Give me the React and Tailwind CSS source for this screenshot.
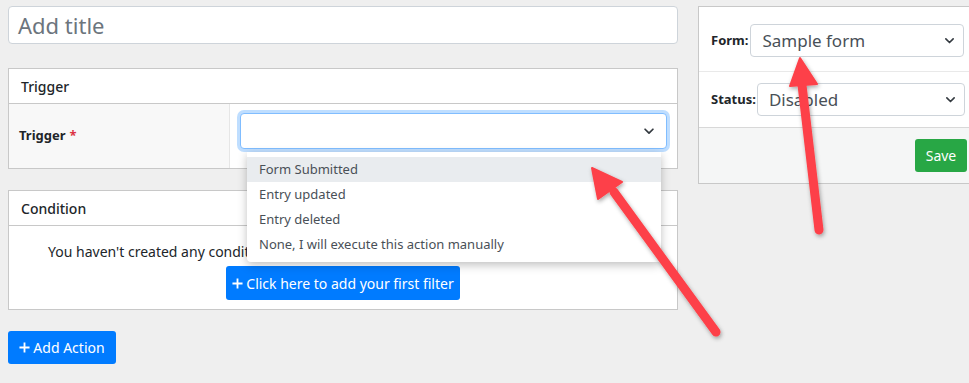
import React from "react";

const Chevron = ({ className = "" }) => (
    <svg viewBox="0 0 16 16" className={className} fill="none" stroke="currentColor" strokeWidth="2" strokeLinecap="round" strokeLinejoin="round">
        <path d="M3.5 6l4.5 4.5L12.5 6" />
    </svg>
);

const Plus = () => (
    <svg viewBox="0 0 12 12" className="w-[11px] h-[11px] mr-[3px]" fill="none" stroke="currentColor" strokeWidth="2">
        <path d="M6 0.5v11M0.5 6h11" />
    </svg>
);

function FakeSelect({ value, className = "" }) {
    return (
        <div className={`flex items-center justify-between h-[33px] pl-[11px] pr-[7px] bg-white border border-[#ced4da] rounded text-[17px] text-[#495057] ${className}`}>
            <span>{value}</span>
            <Chevron className="w-[13px] h-[13px] text-[#343a40]" />
        </div>
    );
}

export default function App() {
    const options = ["Form Submitted", "Entry updated", "Entry deleted", "None, I will execute this action manually"];

    return (
        <div className="relative w-[969px] h-[383px] overflow-hidden bg-[#efefef] font-['Noto_Sans',sans-serif] text-[#212529]">
            <div className="flex gap-5 pl-2 pt-[6px]">
                {/* Main column */}
                <div className="w-[670px] shrink-0">
                    <div className="h-[38px] bg-white border border-[#ced4da] rounded flex items-center px-[9px] text-[22px] text-[#6c757d]">
                        Add title
                    </div>

                    {/* Trigger card */}
                    <div className="mt-6 bg-white border border-[#c8c8c8]">
                        <div className="h-[35px] flex items-center px-3 text-[14px] font-medium border-b border-[#c8c8c8]">
                            Trigger
                        </div>
                        <div className="flex h-[64px]">
                            <div className="w-[221px] bg-[#f8f8f8] border-r border-[#e6e6e6] flex items-center px-[10px] text-[13px] font-bold">
                                Trigger <span className="text-[#dc3545] ml-1">*</span>
                            </div>
                            <div className="flex-1 relative px-[10px] pt-[9px]">
                                <div className="h-[36px] bg-white border border-[#80bdff] rounded ring-[3px] ring-[#007bff]/25 flex items-center justify-end pr-[10px]">
                                    <Chevron className="w-[14px] h-[14px] text-[#343a40]" />
                                </div>
                                {/* Open dropdown */}
                                <div className="absolute z-10 left-[17px] top-[48px] w-[414px] bg-white rounded-b py-[5px] shadow-[0_3px_10px_rgba(0,0,0,0.25)] text-[13px] text-[#495057]">
                                    {options.map((o, i) => (
                                        <div key={o} className={`h-[25px] flex items-center px-3 ${i === 0 ? "bg-[#e9ecef]" : ""}`}>
                                            {o}
                                        </div>
                                    ))}
                                </div>
                            </div>
                        </div>
                    </div>

                    {/* Condition card */}
                    <div className="mt-[21px] bg-white border border-[#c8c8c8]">
                        <div className="h-[35px] flex items-center px-3 text-[14px] font-medium border-b border-[#c8c8c8]">
                            Condition
                        </div>
                        <div className="h-[83px] flex flex-col items-center pt-[15px]">
                            <p className="text-[14px] text-[#212529] whitespace-nowrap">
                                You haven't created any condition yet. Click the button below to add a filter for this action.
                            </p>
                            <button className="mt-[4px] h-[34px] w-[234px] flex items-center justify-center bg-[#007bff] text-white text-[14px] rounded-[3px]">
                                <Plus />Click here to add your first filter
                            </button>
                        </div>
                    </div>

                    <button className="mt-[21px] h-[33px] w-[108px] flex items-center justify-center bg-[#007bff] text-white text-[14px] rounded-[3px]">
                        <Plus />Add Action
                    </button>
                </div>

                {/* Sidebar */}
                <div className="w-[290px] shrink-0 bg-white border border-[#c8c8c8] self-start">
                    <div className="flex items-center h-[65px] pt-[3px] px-3 border-b border-[#e9e9e9]">
                        <span className="text-[13px] font-bold mr-[2px]">Form:</span>
                        <FakeSelect value="Sample form" className="w-[214px]" />
                    </div>
                    <div className="flex items-center h-[55px] px-3">
                        <span className="text-[13px] font-bold mr-[1px]">Status:</span>
                        <FakeSelect value="Disabled" className="w-[208px]" />
                    </div>
                    <div className="h-[56px] bg-[#f5f6f6] border-t border-[#d8d8d8] flex items-center pl-[216px]">
                        <button className="h-[33px] w-[52px] bg-[#28a745] text-white text-[14px] rounded-[3px]">
                            Save
                        </button>
                    </div>
                </div>
            </div>

            {/* Annotation arrows */}
            <svg className="absolute inset-0 pointer-events-none z-20" width="969" height="383">
                <defs>
                    <filter id="sh" x="-20%" y="-20%" width="140%" height="140%">
                        <feDropShadow dx="1" dy="2" stdDeviation="2" floodColor="#000" floodOpacity="0.35" />
                    </filter>
                </defs>
                <g filter="url(#sh)" fill="#fd4148" stroke="#fd4148" strokeLinecap="round">
                    <line x1="716" y1="332" x2="614" y2="192" strokeWidth="9" />
                    <polygon points="592,168 622,182 598,199" strokeWidth="2" strokeLinejoin="round" />
                    <line x1="819" y1="230" x2="802" y2="85" strokeWidth="9" />
                    <polygon points="800,58 790,86 817,84" strokeWidth="2" strokeLinejoin="round" />
                </g>
            </svg>
        </div>
    );
}
